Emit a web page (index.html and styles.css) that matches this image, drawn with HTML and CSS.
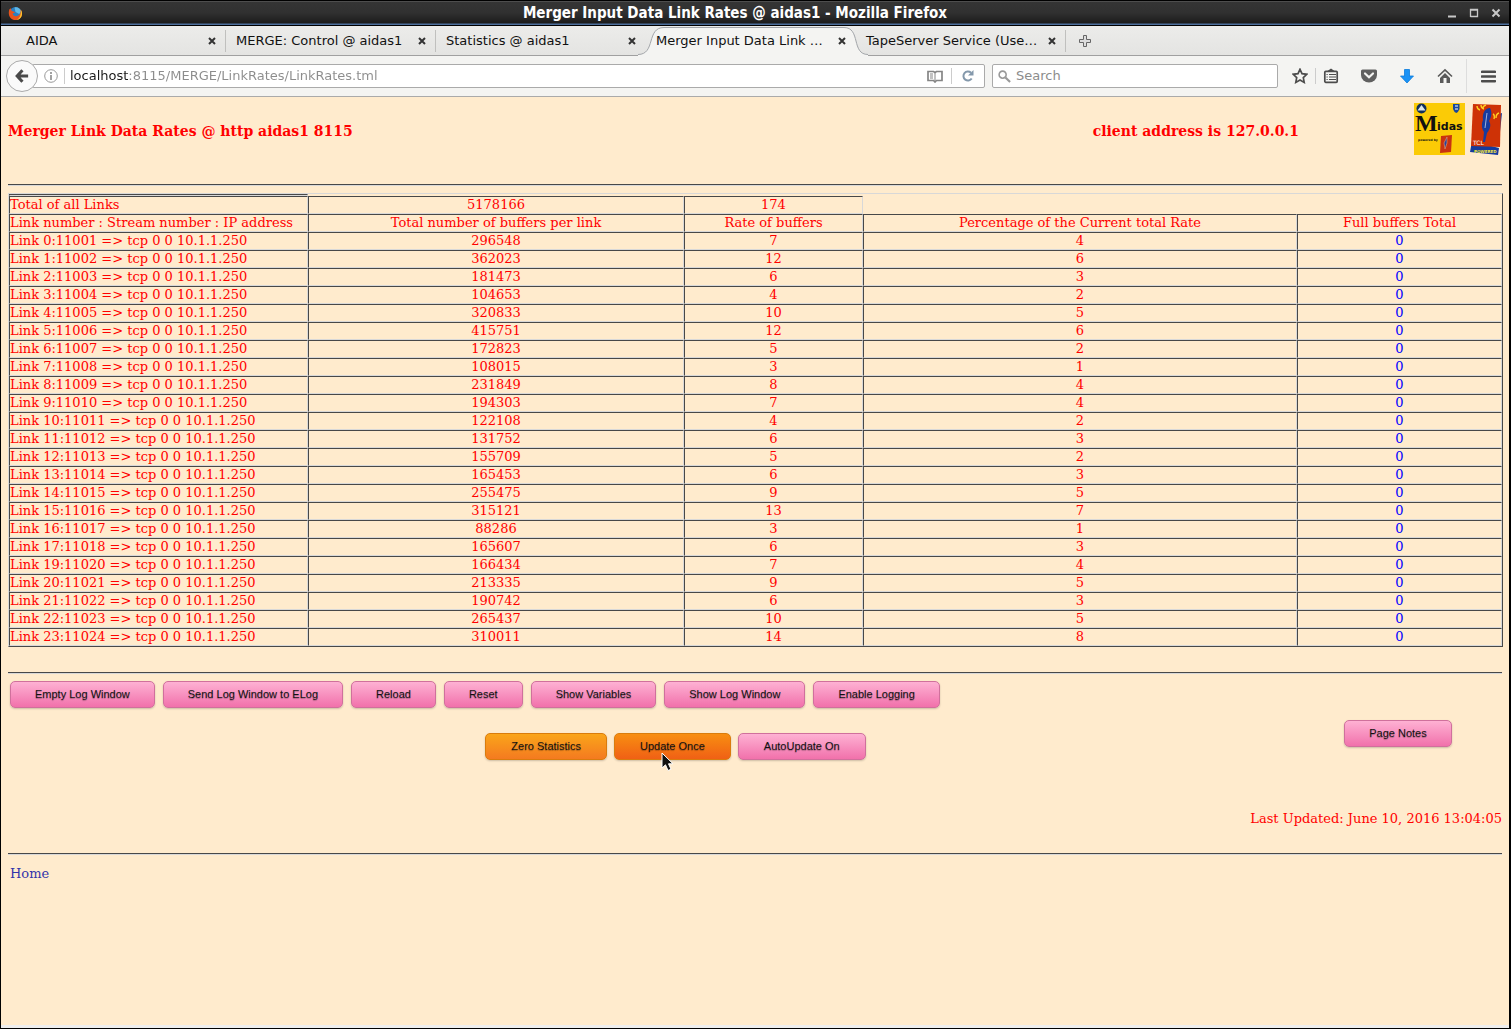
FILE: index.html
```html
<!DOCTYPE html>
<html lang="en">
<head>
<meta charset="utf-8">
<title>Merger Input Data Link Rates @ aidas1</title>
<link rel="stylesheet" href="styles.css">
</head>
<body>
<header class="titlebar">
  <svg class="app-icon" viewBox="0 0 16 16" aria-hidden="true">
    <circle cx="8" cy="7.500" r="6.500" fill="#2c7fc0"/>
    <path d="M7 1.500c3-1 6 1 7 4l-2 3-4-2z" fill="#5fb8e6"/>
    <path d="M1.500 3.500C0 8 1 13 5.500 14.700c4 1.300 9-1 9.500-6.200.1-2-.5-3.500-1.500-4.800.4 3-.6 6-3.500 7-2.500.7-5-.5-5-3 1 .3 2-.2 2.500-1L5 5.500 3.500 4.800 3 2.500z" fill="#e8541c"/>
    <path d="M13.500 3.700c1.700 2.200 2 5 .8 7.500-1.200 2.300-3 3.500-5.300 3.800 3-1.500 5.300-4.500 4.500-11.300z" fill="#fbc62c"/>
  </svg>
  <h1 class="window-title">Merger Input Data Link Rates @ aidas1 - Mozilla Firefox</h1>
  <div class="window-buttons">
    <button class="window-button" aria-label="Minimize"><svg viewBox="0 0 10 10"><path d="M1 8.500h8" stroke="#c8c8c8" stroke-width="2"/></svg></button>
    <button class="window-button" aria-label="Maximize"><svg viewBox="0 0 10 10"><path d="M1.500 9V1.500h7V8.500h-7M1 2h8" fill="none" stroke="#c8c8c8" stroke-width="1.300"/></svg></button>
    <button class="window-button" aria-label="Close"><svg viewBox="0 0 10 10"><path d="M1.500 1.500l7 7M8.500 1.500l-7 7" stroke="#c8c8c8" stroke-width="2"/></svg></button>
  </div>
</header>

<nav class="tabs" aria-label="Tabs">
  <div class="tab"><a class="tab-title" href="#">AIDA</a><button class="tab-close" aria-label="Close tab"><svg viewBox="0 0 8 8"><path d="M1 1l6 6M7 1L1 7" stroke="#333" stroke-width="2"/></svg></button></div>
  <div class="tab"><a class="tab-title" href="#">MERGE: Control @ aidas1</a><button class="tab-close" aria-label="Close tab"><svg viewBox="0 0 8 8"><path d="M1 1l6 6M7 1L1 7" stroke="#333" stroke-width="2"/></svg></button></div>
  <div class="tab"><a class="tab-title" href="#">Statistics @ aidas1</a><button class="tab-close" aria-label="Close tab"><svg viewBox="0 0 8 8"><path d="M1 1l6 6M7 1L1 7" stroke="#333" stroke-width="2"/></svg></button></div>
  <div class="tab tab-active">
    <svg class="tab-shape" viewBox="0 0 230 30" preserveAspectRatio="none" aria-hidden="true"><path d="M0 28.500C18 28.500 8 1.500 26 1.500H206C223 1.500 213 28.500 230 28.500V30H0z" fill="#f4f4f2"/><path d="M0 28.500C18 28.500 8 1.500 26 1.500H206C223 1.500 213 28.500 230 28.500" fill="none" stroke="#a3a6aa"/></svg>
    <a class="tab-title" href="#">Merger Input Data Link …</a><button class="tab-close" aria-label="Close tab"><svg viewBox="0 0 8 8"><path d="M1 1l6 6M7 1L1 7" stroke="#333" stroke-width="2"/></svg></button></div>
  <div class="tab"><a class="tab-title" href="#">TapeServer Service (Use…</a><button class="tab-close" aria-label="Close tab"><svg viewBox="0 0 8 8"><path d="M1 1l6 6M7 1L1 7" stroke="#333" stroke-width="2"/></svg></button></div>
  <button class="new-tab" aria-label="New tab"><svg viewBox="0 0 12 12"><path d="M4.500.5h3v4h4v3h-4v4h-3v-4h-4v-3h4z" fill="#ddd" stroke="#666"/></svg></button>
</nav>

<div class="toolbar">
  <button class="back" aria-label="Back"><svg viewBox="0 0 16 16"><path d="M8.500 1.500L2.500 8l6 6.500M3 8h12" fill="none" stroke="#4a4a4a" stroke-width="3.500"/></svg></button>
  <div class="url-box">
    <svg class="icon-info" viewBox="0 0 14 14" aria-hidden="true"><circle cx="7" cy="7" r="6.300" fill="none" stroke="#999"/><path d="M7 6v5M7 3v2" stroke="#8a8a8a" stroke-width="1.600"/></svg>
    <span class="box-divider"></span>
    <input class="url-input" type="text" aria-label="Address" value="localhost:8115/MERGE/LinkRates/LinkRates.tml">
    <button class="reader" aria-label="Reader view"><svg viewBox="0 0 16 13"><path d="M1 1.500h5.500L8 2.500l1.500-1H15v9H9.500L8 12l-1.500-1.500H1z" fill="none" stroke="#858585" stroke-width="1.700"/><path d="M8 2v9M3 4h3M3 6h3M3 8h3" stroke="#858585"/></svg></button>
    <span class="box-divider"></span>
    <button class="reload" aria-label="Reload page"><svg viewBox="0 0 12 12"><path d="M9.700 8.500A4.500 4.500 0 1 1 9 2.700" fill="none" stroke="#8398ab" stroke-width="2"/><path d="M11.500 0v5.500H6z" fill="#8398ab"/></svg></button>
  </div>
  <div class="search-box">
    <svg class="icon-search" viewBox="0 0 14 14" aria-hidden="true"><circle cx="5" cy="5" r="3.800" fill="none" stroke="#999" stroke-width="1.700"/><path d="M8 8l5 5" stroke="#999" stroke-width="2.300"/></svg>
    <input class="search-input" type="text" aria-label="Search" placeholder="Search">
  </div>
  <div class="tools">
    <button class="tool tool-star" aria-label="Bookmark this page"><svg viewBox="0 0 16 16"><path d="M8 1.300l2 4.400 4.800.6-3.500 3.300.9 4.800L8 12l-4.200 2.400.9-4.800L1.200 6.300 6 5.700z" fill="none" stroke="#4c4c4c" stroke-width="1.700"/></svg></button>
    <span class="box-divider"></span>
    <button class="tool tool-list" aria-label="Bookmarks"><svg viewBox="0 0 16 16"><rect x="1.800" y="3.300" width="12.400" height="11" rx="1" fill="#f4f4f2" stroke="#4c4c4c" stroke-width="1.700"/><path d="M4.500 3L8 .4 11.500 3z" fill="#4c4c4c"/><path d="M3.500 6.500h1.200M3.500 9h1.200M3.500 11.500h1.200M6 6.500h7M6 9h7M6 11.500h7" stroke="#4c4c4c" stroke-width="1.200"/></svg></button>
    <button class="tool" aria-label="Pocket"><svg viewBox="0 0 16 16"><path d="M1.500 1.500h13q1.500 0 1.500 1.500v4a8 7.500 0 0 1-16 0V3q0-1.500 1.500-1.500z" fill="#606060"/><path d="M4 5.500L8 9.300l4-3.800" fill="none" stroke="#f4f4f2" stroke-width="2.200" stroke-linecap="round"/></svg></button>
    <button class="tool" aria-label="Downloads"><svg viewBox="0 0 16 16"><path d="M5.500 1.500h5V8h4L8 15 1.500 8h4z" fill="#1a92f5" stroke="#0b7bdc" stroke-width=".8"/></svg></button>
    <button class="tool" aria-label="Home page"><svg viewBox="0 0 16 16"><path d="M1 8.500L8 1.800l7 6.700" fill="none" stroke="#5a5a5a" stroke-width="1.600"/><path d="M3 10l5-5 5 5v5H9.500v-5h-3v5H3z" fill="#5a5a5a"/></svg></button>
    <button class="tool tool-menu" aria-label="Open menu"><svg viewBox="0 0 16 16"><path d="M1 3h14M1 8h14M1 13h14" stroke="#4c4c4c" stroke-width="2.600" stroke-linecap="round"/></svg></button>
  </div>
</div>

<main class="page">
  <section class="masthead">
    <h2 class="heading">Merger Link Data Rates @ http aidas1 8115</h2>
    <p class="client">client address is 127.0.0.1</p>
    <div class="logos">
      <svg class="midas" viewBox="0 0 51 52" role="img" aria-label="Midas">
        <path d="M0 0h51v52H0z" fill="#fbcb06"/>
        <circle cx="7.500" cy="5.500" r="5" fill="#102f5c"/><path d="M3.500 7.500L7.500 2l4 5.500z" fill="#dce6ea"/>
        <path d="M39 1h6.500v5q-1 3-3.200 4Q40 9 39 6z" fill="#18479c"/><path d="M41 3h3M41 6h3" stroke="#fff"/>
        <text x="1" y="28" font-family="Liberation Serif" font-weight="bold" font-size="24" fill="#111">M</text>
        <text x="23" y="27" font-family="DejaVu Sans" font-weight="bold" font-size="11" fill="#111">idas</text>
        <text x="4" y="38" font-family="DejaVu Sans" font-weight="bold" font-size="3" fill="#111">powered by</text>
        <path d="M27 33l11-1-1 17-11 1z" fill="#c93210"/><path d="M33 34l-3 6 1 6 2-6z" fill="#28439c" stroke="#eda06b" stroke-width=".6"/>
      </svg>
      <svg class="tcl" viewBox="0 0 32 52" role="img" aria-label="Tcl powered">
        <path d="M2 38l-2 11 28 3 1-7zM29 11l3-1-3 28z" fill="#163b9c"/>
        <path d="M3 1l28 1-1 42-29-1z" fill="#ce3206"/>
        <path d="M20 5c-5 0-8 5-7 12-2 5-1 9 1 12l-1 10 2 0 2-9c4-5 4-9 2-12 3-5 3-9 1-13z" fill="#173b9f"/>
        <path d="M17 10l-2 15" stroke="#9fb3dd" fill="none"/>
        <path d="M7 3q0 3 3 4M11 2q0 3 3 4M16 2q-3 1-3 3M23 11q2 1 1 5M29 10q-3 1-3 5" fill="none" stroke="#ffce21" stroke-width="1.400"/>
        <text x="3" y="42" font-family="DejaVu Sans" font-size="6" fill="#fff">TCL</text>
        <text x="4" y="50" font-family="DejaVu Sans" font-weight="bold" font-size="4" fill="#f5e83d">POWERED</text>
      </svg>
    </div>
  </section>
  <hr class="rule">
  <table class="rates">
    <colgroup><col class="col-link"><col class="col-total"><col class="col-rate"><col class="col-percent"><col class="col-full"></colgroup>
    <thead>
      <tr class="spacer"><td></td></tr>
      <tr><td>Total of all Links</td><td>5178166</td><td>174</td></tr>
      <tr><th scope="col">Link number : Stream number : IP address</th><th scope="col">Total number of buffers per link</th><th scope="col">Rate of buffers</th><th scope="col">Percentage of the Current total Rate</th><th scope="col">Full buffers Total</th></tr>
    </thead>
    <tbody>
      <tr><td>Link 0:11001 =&gt; tcp 0 0 10.1.1.250</td><td>296548</td><td>7</td><td>4</td><td>0</td></tr>
      <tr><td>Link 1:11002 =&gt; tcp 0 0 10.1.1.250</td><td>362023</td><td>12</td><td>6</td><td>0</td></tr>
      <tr><td>Link 2:11003 =&gt; tcp 0 0 10.1.1.250</td><td>181473</td><td>6</td><td>3</td><td>0</td></tr>
      <tr><td>Link 3:11004 =&gt; tcp 0 0 10.1.1.250</td><td>104653</td><td>4</td><td>2</td><td>0</td></tr>
      <tr><td>Link 4:11005 =&gt; tcp 0 0 10.1.1.250</td><td>320833</td><td>10</td><td>5</td><td>0</td></tr>
      <tr><td>Link 5:11006 =&gt; tcp 0 0 10.1.1.250</td><td>415751</td><td>12</td><td>6</td><td>0</td></tr>
      <tr><td>Link 6:11007 =&gt; tcp 0 0 10.1.1.250</td><td>172823</td><td>5</td><td>2</td><td>0</td></tr>
      <tr><td>Link 7:11008 =&gt; tcp 0 0 10.1.1.250</td><td>108015</td><td>3</td><td>1</td><td>0</td></tr>
      <tr><td>Link 8:11009 =&gt; tcp 0 0 10.1.1.250</td><td>231849</td><td>8</td><td>4</td><td>0</td></tr>
      <tr><td>Link 9:11010 =&gt; tcp 0 0 10.1.1.250</td><td>194303</td><td>7</td><td>4</td><td>0</td></tr>
      <tr><td>Link 10:11011 =&gt; tcp 0 0 10.1.1.250</td><td>122108</td><td>4</td><td>2</td><td>0</td></tr>
      <tr><td>Link 11:11012 =&gt; tcp 0 0 10.1.1.250</td><td>131752</td><td>6</td><td>3</td><td>0</td></tr>
      <tr><td>Link 12:11013 =&gt; tcp 0 0 10.1.1.250</td><td>155709</td><td>5</td><td>2</td><td>0</td></tr>
      <tr><td>Link 13:11014 =&gt; tcp 0 0 10.1.1.250</td><td>165453</td><td>6</td><td>3</td><td>0</td></tr>
      <tr><td>Link 14:11015 =&gt; tcp 0 0 10.1.1.250</td><td>255475</td><td>9</td><td>5</td><td>0</td></tr>
      <tr><td>Link 15:11016 =&gt; tcp 0 0 10.1.1.250</td><td>315121</td><td>13</td><td>7</td><td>0</td></tr>
      <tr><td>Link 16:11017 =&gt; tcp 0 0 10.1.1.250</td><td>88286</td><td>3</td><td>1</td><td>0</td></tr>
      <tr><td>Link 17:11018 =&gt; tcp 0 0 10.1.1.250</td><td>165607</td><td>6</td><td>3</td><td>0</td></tr>
      <tr><td>Link 19:11020 =&gt; tcp 0 0 10.1.1.250</td><td>166434</td><td>7</td><td>4</td><td>0</td></tr>
      <tr><td>Link 20:11021 =&gt; tcp 0 0 10.1.1.250</td><td>213335</td><td>9</td><td>5</td><td>0</td></tr>
      <tr><td>Link 21:11022 =&gt; tcp 0 0 10.1.1.250</td><td>190742</td><td>6</td><td>3</td><td>0</td></tr>
      <tr><td>Link 22:11023 =&gt; tcp 0 0 10.1.1.250</td><td>265437</td><td>10</td><td>5</td><td>0</td></tr>
      <tr><td>Link 23:11024 =&gt; tcp 0 0 10.1.1.250</td><td>310011</td><td>14</td><td>8</td><td>0</td></tr>
    </tbody>
  </table>
  <hr class="rule">
  <div class="actions">
    <button class="btn">Empty Log Window</button>
    <button class="btn">Send Log Window to ELog</button>
    <button class="btn">Reload</button>
    <button class="btn">Reset</button>
    <button class="btn">Show Variables</button>
    <button class="btn">Show Log Window</button>
    <button class="btn">Enable Logging</button>
  </div>
  <div class="controls">
    <div class="updates">
      <button class="btn btn-orange">Zero Statistics</button>
      <button class="btn btn-orange btn-hover">Update Once<svg class="pointer" viewBox="0 0 14 20" aria-hidden="true"><path d="M1 1v15l3.500-3.200L7 18.500l3-1.300-2.500-5.400H12z" fill="#111" stroke="#fff"/></svg></button>
      <button class="btn">AutoUpdate On</button>
    </div>
    <div class="notes"><button class="btn">Page Notes</button></div>
  </div>
  <p class="updated">Last Updated: June 10, 2016 13:04:05</p>
  <hr class="rule">
  <a class="home" href="#">Home</a>
</main>
</body>
</html>
```
FILE: styles.css
```css
* { box-sizing: border-box; }

body {
  margin: 0;
  min-height: 100vh;
  display: flex;
  flex-direction: column;
  background: #ffebcd;
  border: solid #000;
  border-width: 0 2px 1px 1px;
  font: 13px/16px "DejaVu Serif", serif;
  color: #f00;
}

button { padding: 0; border: 0; background: none; }
svg { display: block; }
h1, h2, p { margin: 0; }

/* Window frame */
.titlebar {
  height: 26px;
  flex: none;
  display: flex;
  align-items: center;
  padding: 0 8px 0 7px;
  border-top: 1px solid #000;
  border-bottom: 1px solid #000;
  background: linear-gradient(#666 0, #353535 1px, #303030 12px, #1c1c1c 22px, #4d6f9c 23px);
}
.app-icon { width: 15px; height: 15px; }
.window-title {
  flex: 1;
  text-align: center;
  color: #fff;
  font: bold 15px/20px "DejaVu Sans Condensed", "DejaVu Sans", sans-serif;
}
.window-buttons { display: flex; gap: 12px; }
.window-button { width: 10px; height: 10px; }

.tabs, .toolbar {
  flex: none;
  display: flex;
  align-items: center;
  font: 13px/18px "DejaVu Sans", sans-serif;
  color: #111;
}
.tabs {
  height: 30px;
  padding-left: 15px;
  background: linear-gradient(#ececea, #e4e4e2);
  border-bottom: 1px solid #a0a0a0;
}
.tab {
  width: 210px;
  height: 22px;
  display: flex;
  align-items: center;
  justify-content: space-between;
  padding: 0 9px 0 10px;
  border-right: 1px solid #c0c0be;
  position: relative;
}
.tab:has(+ .tab-active), .tab-active { border-right-color: transparent; }
.tab-shape { position: absolute; left: -8px; top: -4px; width: 230px; height: 30px; }
.tab-title { color: inherit; text-decoration: none; white-space: nowrap; position: relative; }
.tab-close { width: 8px; height: 8px; position: relative; }
.new-tab { width: 12px; height: 12px; margin-left: 13px; }

.toolbar {
  height: 41px;
  padding: 0 13px 0 5px;
  background: #f4f4f2;
  border-bottom: 1px solid #aaa;
}
.back {
  width: 32px;
  height: 32px;
  display: grid;
  place-items: center;
  border: 1px solid #aaa;
  border-radius: 50%;
  background: #fafafa;
  position: relative;
}
.back svg { width: 14px; height: 14px; }
.url-box, .search-box {
  height: 24px;
  display: flex;
  align-items: center;
  border: 1px solid #aaa;
  border-radius: 2px;
  background: #fff;
}
.url-box { flex: 1; margin-left: -6px; padding: 0 10px 0 11px; }
.icon-info { width: 14px; height: 14px; margin-right: 6px; }
.box-divider { width: 1px; height: 16px; background: #ccc; }
.url-input, .search-input {
  flex: 1;
  min-width: 0;
  padding: 0;
  border: 0;
  outline: 0;
  background: none;
  font: inherit;
}
.url-input {
  margin-left: 5px;
  color: transparent;
  background: linear-gradient(90deg, #1a1a1a 59px, #8c8c8c 59px);
  -webkit-background-clip: text;
  background-clip: text;
}
.reader { width: 16px; margin-right: 8px; }
.reload { width: 12px; margin-left: 10px; }
.search-box { width: 286px; margin-left: 7px; padding: 0 5px; }
.icon-search { width: 13px; height: 13px; margin-right: 5px; }
.search-input::placeholder { color: #8c8c8c; opacity: 1; }
.tools { display: flex; align-items: center; gap: 22px; margin-left: 14px; }
.tool { width: 16px; height: 16px; }
.tools .box-divider { margin: 0 -15px; }
.tool-menu { width: 30px; height: 34px; padding-left: 14px; margin-left: -9px; border-left: 1px solid #ddd; }

/* Page content */
.page { flex: 1; padding: 6px 7px 0; border-bottom: 3px solid #eee; }
.masthead { height: 81px; display: flex; align-items: flex-start; }
.heading, .client { font-size: 14px; line-height: 20px; font-weight: bold; padding-top: 18px; }
.heading { flex: 1; }
.client { margin-right: 115px; }
.logos { display: flex; gap: 5px; }
.midas { width: 51px; height: 52px; }
.tcl { width: 32px; height: 52px; }
.rule { margin: 0; border: 0; height: 2px; border-top: 1px solid #484848; background: #d8d8d8; }
.rates {
  width: 100%;
  table-layout: fixed;
  border-collapse: separate;
  border-spacing: 0;
  border: 1px solid;
  border-color: #d8d8d8 #484848 #484848 #d8d8d8;
  margin: 7px 0 25px;
}
.col-link { width: 299px; }
.col-total { width: 376px; }
.col-rate { width: 179px; }
.col-percent { width: 434px; }
.col-full { width: 205px; }
.rates th, .rates td {
  padding: 0;
  border: 1px solid;
  border-color: #484848 #d8d8d8 #d8d8d8 #484848;
  font-weight: normal;
  text-align: center;
  white-space: nowrap;
}
.rates th:first-child, .rates td:first-child { text-align: left; }
.rates tbody td:last-child { color: #00f; }

.btn {
  height: 27px;
  padding: 0 24px;
  border: 1px solid #d0709c;
  border-radius: 5px;
  background: linear-gradient(#feb1d3, #f171ab);
  box-shadow: 0 1px 2px rgba(0, 0, 0, .2);
  font: 11px/13px "Liberation Sans", sans-serif;
  color: #111;
  text-shadow: 0 1px 1px rgba(0, 0, 0, .3);
  white-space: nowrap;
  position: relative;
}
.btn-orange { border-color: #da7c0c; background: linear-gradient(#faa51a, #f47a20); }
.btn-hover { background: linear-gradient(#f88e11, #f06015); }
.pointer { position: absolute; left: 46px; top: 18px; width: 14px; height: 20px; }
.actions { display: flex; gap: 8px; padding: 7px 2px 12px; }
.controls { display: flex; align-items: flex-start; }
.updates {
  flex: 1;
  display: flex;
  justify-content: center;
  gap: 7px;
  margin-left: 49px;
  padding: 13px 0 51px;
}
.updates .btn { padding: 0 25px; }
.notes { width: 208px; text-align: center; }
.updated { text-align: right; padding-bottom: 26px; }
.home { display: inline-block; margin: 11px 2px; color: #33a; text-decoration: none; }
```
